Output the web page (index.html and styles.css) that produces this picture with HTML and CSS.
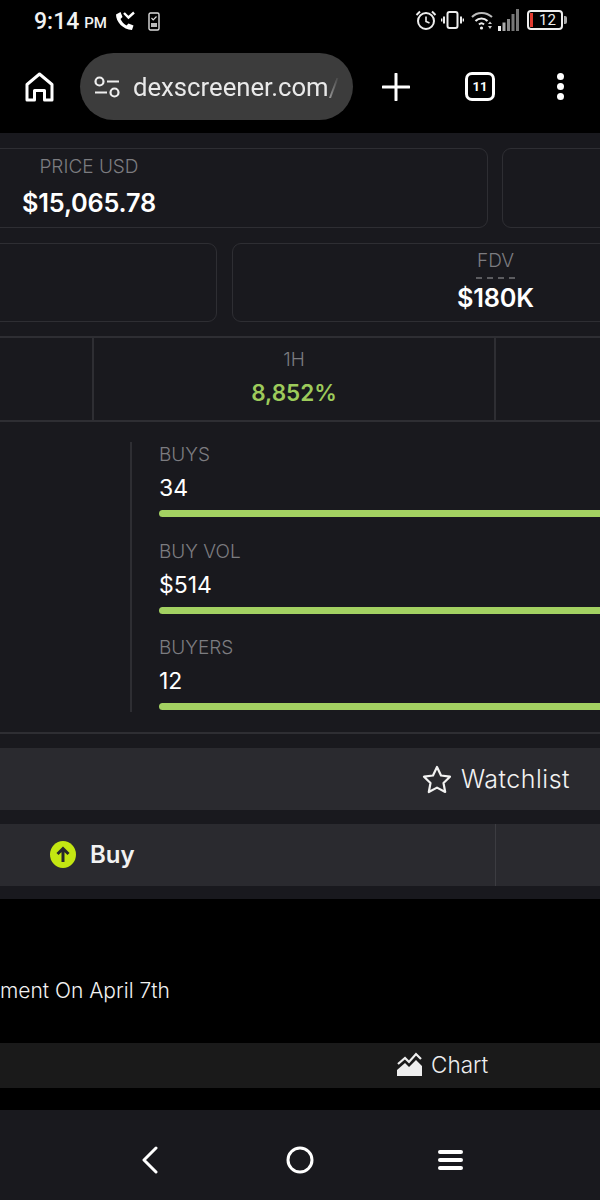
FILE: index.html
```html
<!DOCTYPE html>
<html lang="en">
<head>
  <meta charset="UTF-8">
  <meta name="viewport" content="width=device-width, initial-scale=1.0">
  <title>dexscreener</title>
  <link rel="stylesheet" href="styles.css">
</head>
<body>
  <div class="status-bar">
    <div class="status-left">
      <span class="clock">9:14</span>
      <span class="ampm">PM</span>
      <svg class="ic-call" width="21" height="20" viewBox="0 0 21 20" fill="none">
        <path d="M1 3.500 C1 11 8 18.500 17 19 L18.500 14.500 L13.500 12.500 L11.500 14.500 C9 13 6.500 10.500 5.500 8 L7.500 6 L5.500 1 Z" fill="#fff"/>
        <path d="M9 2 L13.500 6.500 L19 1.500" stroke="#fff" stroke-width="2.400"/>
      </svg>
      <svg class="ic-note" width="12" height="19" viewBox="0 0 12 19" fill="none">
        <rect x="1" y="1" width="10" height="17" rx="1.500" stroke="#ddd" stroke-width="1.400"/>
        <path d="M3.500 6 L5.200 7.800 L8.500 4.500" stroke="#ddd" stroke-width="1.200"/>
        <rect x="3" y="11" width="6" height="4" fill="#bbb"/>
      </svg>
    </div>
    <div class="status-right">
      <svg width="22" height="20" viewBox="0 0 22 20" fill="none">
        <circle cx="11" cy="11" r="8" stroke="#eee" stroke-width="2"/>
        <path d="M11 6.500 V11.500 L14.500 13" stroke="#eee" stroke-width="1.600"/>
        <path d="M1.500 5 L5 1.500 M20.500 5 L17 1.500" stroke="#eee" stroke-width="2"/>
      </svg>
      <svg width="23" height="18" viewBox="0 0 23 18" fill="none">
        <rect x="6.500" y="1" width="10" height="16" rx="2" stroke="#eee" stroke-width="2"/>
        <path d="M3 5.500 V12.500 M20 5.500 V12.500" stroke="#eee" stroke-width="2"/>
        <path d="M0.700 7.500 V10.500 M22.300 7.500 V10.500" stroke="#eee" stroke-width="1.400"/>
      </svg>
      <svg class="ic-wifi" width="22" height="20" viewBox="0 0 22 20" fill="none">
        <path d="M1 7 C6 1.500 15 1.500 21 7" stroke="#bbb" stroke-width="2"/>
        <path d="M4.500 11 C8 7.500 13 7.500 16.500 11" stroke="#eee" stroke-width="2"/>
        <path d="M8 14.500 C9.500 13 11.500 13 13 14.500" stroke="#eee" stroke-width="2"/>
        <circle cx="10.500" cy="18" r="1.600" fill="#eee"/>
        <path d="M19 11.500 L21 14 H17 Z M19 19 L21 16 H17 Z" fill="#ccc"/>
      </svg>
      <svg class="ic-signal" width="21" height="22" viewBox="0 0 21 22">
        <rect x="0" y="17" width="3" height="5" fill="#eee"/>
        <rect x="4.500" y="13.500" width="3" height="8.500" fill="#aaa"/>
        <rect x="9" y="10" width="3" height="12" fill="#888"/>
        <rect x="13.500" y="5" width="3" height="17" fill="#777"/>
        <rect x="18" y="0" width="3" height="22" fill="#777"/>
      </svg>
      <div class="battery">
        <span class="battery-low"></span>
        <span class="battery-num">12</span>
      </div>
    </div>
  </div>

  <div class="toolbar">
    <svg class="home-icon" width="29" height="30" viewBox="0 0 29 30" fill="none">
      <path d="M2 28 V12.500 L14.500 2 L27 12.500 V28 H19.500 V18.500 H9.500 V28 Z" stroke="#fff" stroke-width="3" stroke-linejoin="round"/>
    </svg>
    <div class="address-pill">
      <svg width="26" height="22" viewBox="0 0 26 22" fill="none">
        <circle cx="5.500" cy="5.500" r="4" stroke="#eee" stroke-width="2.200"/>
        <path d="M13 5.500 H25" stroke="#eee" stroke-width="2.200"/>
        <path d="M1 16.500 H13" stroke="#eee" stroke-width="2.200"/>
        <circle cx="20.500" cy="16.500" r="4" stroke="#eee" stroke-width="2.200"/>
      </svg>
      <span class="address-text">dexscreener.com<span class="address-path">/s</span></span>
    </div>
    <svg class="plus-icon" width="28" height="28" viewBox="0 0 28 28" fill="none">
      <path d="M14 1 V27 M1 14 H27" stroke="#fff" stroke-width="3" stroke-linecap="round"/>
    </svg>
    <div class="tab-count">11</div>
    <div class="menu-dots"><span></span><span></span><span></span></div>
  </div>

  <div class="panel">
    <div class="card-row">
      <div class="card card-wide">
        <div class="label">PRICE USD</div>
        <div class="value">$15,065.78</div>
      </div>
      <div class="card card-wide"></div>
    </div>
    <div class="card-row">
      <div class="card card-half"></div>
      <div class="card card-half">
        <div class="label label-dashed">FDV</div>
        <div class="value">$180K</div>
      </div>
    </div>

    <div class="change-row">
      <div class="change-cell"></div>
      <div class="change-cell">
        <div class="label">1H</div>
        <div class="change-value">8,852%</div>
      </div>
      <div class="change-cell"></div>
    </div>

    <div class="stats">
      <div class="stats-left"></div>
      <div class="stats-right">
        <div class="stat">
          <div class="label">BUYS</div>
          <div class="stat-value">34</div>
          <div class="stat-bar"></div>
        </div>
        <div class="stat">
          <div class="label">BUY VOL</div>
          <div class="stat-value">$514</div>
          <div class="stat-bar"></div>
        </div>
        <div class="stat">
          <div class="label">BUYERS</div>
          <div class="stat-value">12</div>
          <div class="stat-bar"></div>
        </div>
      </div>
    </div>

    <div class="watch-bar">
      <svg width="30" height="29" viewBox="0 0 30 29" fill="none">
        <path d="M15 2 L19 10.500 L28 11.700 L21.500 18 L23.200 27 L15 22.600 L6.800 27 L8.500 18 L2 11.700 L11 10.500 Z" stroke="#f2f2f2" stroke-width="2.200" stroke-linejoin="round"/>
      </svg>
      <span class="watch-text">Watchlist</span>
    </div>

    <div class="trade-bar">
      <div class="trade-buy">
        <svg width="26" height="27" viewBox="0 0 26 27">
          <ellipse cx="13" cy="13.500" rx="13" ry="13.500" fill="#c3e612"/>
          <path d="M13 21 V8 M7.500 13 L13 7.500 L18.500 13" fill="none" stroke="#26262b" stroke-width="3"/>
        </svg>
        <span class="buy-text">Buy</span>
      </div>
      <div class="trade-other"></div>
    </div>
  </div>

  <div class="lower">
    <div class="news-line">ment On April 7th</div>
    <div class="chart-bar">
      <svg width="25" height="25" viewBox="0 0 25 25" fill="none">
        <path d="M1 12 L8 6 L12 10 L19 2 L24 7" stroke="#eee" stroke-width="2.200"/>
        <path d="M0 24 V18 L8 11 L12 15 L19 8 L25 14 V24 Z" fill="#eee"/>
      </svg>
      <span class="chart-text">Chart</span>
    </div>
  </div>

  <div class="nav-bar">
    <svg width="18" height="28" viewBox="0 0 18 28" fill="none">
      <path d="M15 2 L3 14 L15 26" stroke="#fff" stroke-width="3" stroke-linecap="round" stroke-linejoin="round"/>
    </svg>
    <svg width="28" height="28" viewBox="0 0 28 28" fill="none">
      <circle cx="14" cy="14" r="12" stroke="#fff" stroke-width="3"/>
    </svg>
    <div class="nav-lines"><span></span><span></span><span></span></div>
  </div>
</body>
</html>
```

FILE: styles.css
```css
html, body {
  margin: 0;
  padding: 0;
}

body {
  width: 600px;
  height: 1200px;
  overflow: hidden;
  background: #000;
  font-family: 'Inter', sans-serif;
  color: #fff;
  display: flex;
  flex-direction: column;
}

/* phone status bar */
.status-bar {
  height: 42px;
  flex: none;
  display: flex;
  justify-content: space-between;
  align-items: center;
  padding: 0 37px 0 34px;
  font-family: 'Roboto', sans-serif;
}

.status-left,
.status-right {
  display: flex;
  align-items: center;
}

.clock {
  font-size: 23px;
  font-weight: 500;
  color: #f2f2f2;
}

.ampm {
  font-size: 15px;
  font-weight: 500;
  margin-left: 5px;
  margin-top: 4px;
  color: #f2f2f2;
}

.ic-call {
  margin-left: 8px;
}

.ic-note {
  margin-left: 12px;
}

.status-right {
  gap: 4px;
  margin-bottom: 2px;
}

.ic-wifi {
  margin-left: 3px;
}

.ic-signal {
  margin-left: 1px;
}

.battery {
  position: relative;
  width: 36px;
  height: 20px;
  margin-left: 4px;
  border: 2px solid #eee;
  border-radius: 4px;
  display: flex;
  align-items: center;
  justify-content: center;
  box-sizing: border-box;
  font-size: 15px;
  color: #eee;
}

.battery::after {
  content: "";
  position: absolute;
  right: -6px;
  top: 4px;
  width: 3px;
  height: 8px;
  background: #aaa;
  border-radius: 0 2px 2px 0;
}

.battery-low {
  position: absolute;
  left: 1px;
  top: 1px;
  bottom: 1px;
  width: 3px;
  background: #e03a2f;
}

.battery-num {
  margin-left: 5px;
}

/* browser toolbar */
.toolbar {
  height: 91px;
  flex: none;
  display: flex;
  align-items: flex-start;
  padding-top: 11px;
  box-sizing: border-box;
  position: relative;
}

.home-icon {
  margin: 19px 0 0 25px;
  flex: none;
}

.address-pill {
  width: 273px;
  height: 67px;
  margin-left: 26px;
  flex: none;
  box-sizing: border-box;
  background: #3c3c3c;
  border-radius: 34px;
  display: flex;
  align-items: center;
  gap: 13px;
  padding-left: 14px;
  overflow: hidden;
}

.address-pill svg {
  flex: none;
}

.address-text {
  font-family: 'Roboto', sans-serif;
  font-size: 25.7px;
  color: #e9e9e9;
  white-space: nowrap;
  width: 206px;
  overflow: hidden;
  flex: none;
  -webkit-mask-image: linear-gradient(to right, #000 94%, transparent);
  mask-image: linear-gradient(to right, #000 94%, transparent);
}

.address-path {
  letter-spacing: -1px;
  color: #b5b5b5;
}

.plus-icon {
  margin: 20px 0 0 29px;
  flex: none;
}

.tab-count {
  width: 30px;
  height: 29px;
  margin: 19px 0 0 55px;
  flex: none;
  box-sizing: border-box;
  border: 3px solid #fff;
  border-radius: 7px;
  display: flex;
  align-items: center;
  justify-content: center;
  font-family: 'Roboto', sans-serif;
  font-size: 13px;
  font-weight: 700;
}

.menu-dots {
  margin: 20px 0 0 62px;
  display: flex;
  flex-direction: column;
  gap: 3px;
}

.menu-dots span {
  display: block;
  width: 7px;
  height: 7px;
  border-radius: 50%;
  background: #fff;
}

/* dark panel, wider than the screen on both sides */
.panel {
  height: 766px;
  flex: none;
  box-sizing: border-box;
  background: #19191e;
  padding-top: 15px;
  display: flex;
  flex-direction: column;
}

.card-row {
  display: flex;
  gap: 14px;
  margin: 0 0 14px -310px;
}

.card-row:first-child {
  margin-bottom: 15px;
}

.card {
  height: 80px;
  flex: none;
  box-sizing: border-box;
  border: 1px solid #2e2e33;
  border-radius: 9px;
  text-align: center;
}

.card-wide {
  width: 798px;
}

.card-half {
  width: 527px;
  height: 79px;
}

.card-half + .card-half {
  margin-left: 1px;
}

.label {
  font-size: 19px;
  font-weight: 300;
  line-height: 26px;
  color: #7c7c80;
}

.card .label {
  margin-top: 5px;
}

.card .label-dashed {
  width: fit-content;
  margin: 4px auto -1px;
  padding: 0 1px 3px;
  border-bottom: 2px dashed #5c5c60;
}

.value {
  font-size: 25.3px;
  font-weight: 600;
  line-height: 36px;
  margin-top: 5px;
  color: #fff;
  letter-spacing: -0.2px;
}

.card .label-dashed + .value {
  line-height: 30px;
}

.change-row {
  height: 86px;
  flex: none;
  box-sizing: border-box;
  border-top: 2px solid #2e2e33;
  border-bottom: 2px solid #2e2e33;
  display: flex;
  margin-left: -308px;
}

.change-cell {
  width: 402px;
  flex: none;
  border-right: 2px solid #2e2e33;
  box-sizing: border-box;
  text-align: center;
  padding-top: 9px;
}

.change-value {
  font-size: 22.5px;
  font-weight: 600;
  line-height: 36px;
  color: #9dcb5b;
  margin-top: 2px;
}

/* buyers block */
.stats {
  height: 312px;
  flex: none;
  box-sizing: border-box;
  padding-top: 20px;
  border-bottom: 2px solid #2e2e33;
  display: flex;
}

.stats-left {
  width: 130px;
  height: 270px;
  flex: none;
  border-right: 2px solid #2e2e33;
}

.stats-right {
  margin-left: 27px;
  flex: 1;
  display: flex;
  flex-direction: column;
  gap: 21.500px;
  margin-right: -20px;
}

.stat .label {
  line-height: 26px;
}

.stat-value {
  font-size: 23px;
  line-height: 34px;
  margin-top: 3px;
  font-weight: 400;
  color: #fff;
}

.stat-bar {
  height: 7px;
  margin-top: 5px;
  border-radius: 4px;
  background: #a3d162;
}

.watch-bar {
  height: 62px;
  flex: none;
  margin-top: 14px;
  background: #2a2a2f;
  display: flex;
  justify-content: flex-end;
  align-items: center;
  gap: 9px;
  padding-right: 30px;
}

.watch-text {
  font-size: 25px;
  font-weight: 300;
  letter-spacing: 0.5px;
  color: #f2f2f2;
}

.trade-bar {
  height: 62px;
  flex: none;
  margin-top: 14px;
  background: #2a2a2f;
  display: flex;
}

.trade-buy {
  width: 496px;
  flex: none;
  box-sizing: border-box;
  border-right: 1px solid #3c3c41;
  display: flex;
  align-items: center;
  gap: 14px;
  padding: 0 0 2px 50px;
}

.buy-text {
  font-size: 24px;
  font-weight: 600;
  color: #f2f2f2;
}

/* black lower part */
.lower {
  height: 211px;
  flex: none;
  display: flex;
  flex-direction: column;
}

.news-line {
  height: 144px;
  flex: none;
  box-sizing: border-box;
  padding-top: 78px;
  font-size: 21px;
  font-weight: 300;
  line-height: 28px;
  color: #f2f2f2;
  white-space: nowrap;
}

.chart-bar {
  height: 45px;
  flex: none;
  box-sizing: border-box;
  background: #1a1a1a;
  display: flex;
  align-items: center;
  gap: 9px;
  padding: 0 0 3px 397px;
}

.chart-text {
  font-size: 22.5px;
  font-weight: 300;
  color: #eee;
}

/* phone nav bar */
.nav-bar {
  height: 90px;
  flex: none;
  box-sizing: border-box;
  background: #19191e;
  display: flex;
  align-items: center;
  justify-content: center;
  padding: 10px 0 0 3px;
}

.nav-bar svg:first-child {
  margin-right: 127px;
}

.nav-lines {
  margin-left: 124px;
  width: 25px;
  display: flex;
  flex-direction: column;
  gap: 4px;
}

.nav-lines span {
  display: block;
  height: 4px;
  border-radius: 2px;
  background: #fff;
}
```
